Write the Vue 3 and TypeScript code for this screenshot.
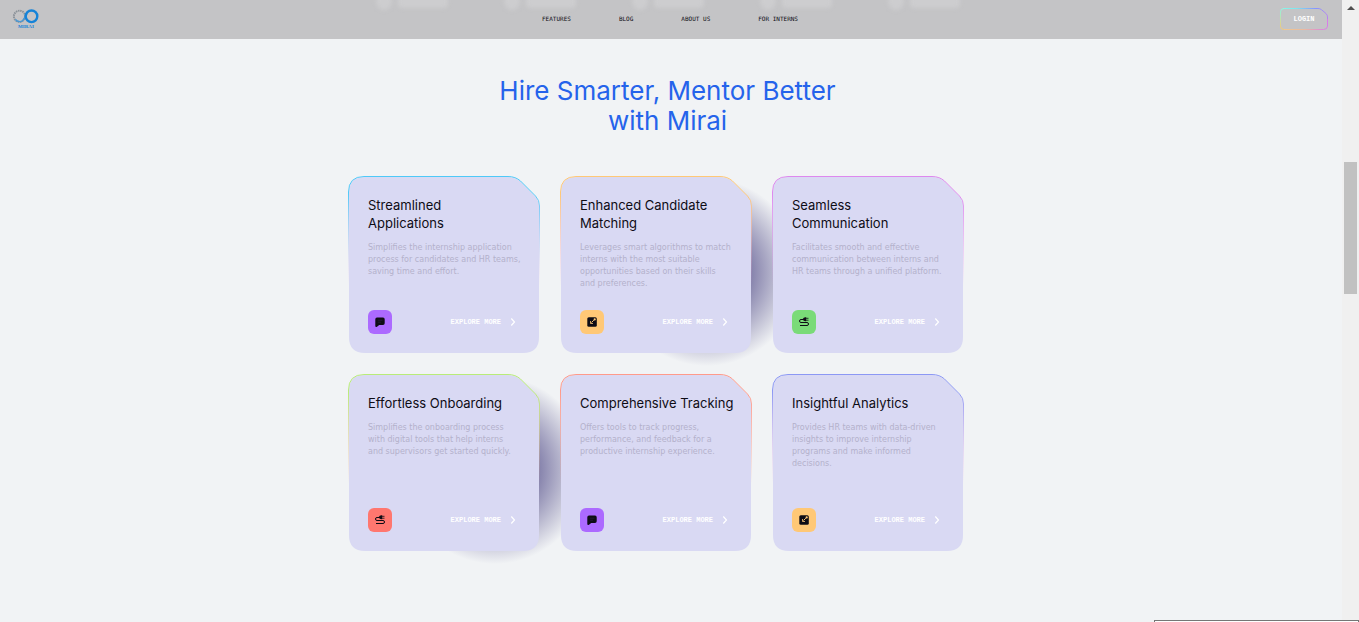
<script setup lang="ts">
type IconName = 'chat' | 'edit' | 'plug'

interface Benefit {
  id: string
  title: string
  text: string
  icon: IconName
  tone: string
  from: string
  to: string
  light?: boolean
}

const links: string[] = ['Features', 'Blog', 'About us', 'For Interns']

const benefits: Benefit[] = [
  { id: 'b1', title: 'Streamlined\nApplications', text: 'Simplifies the internship application\nprocess for candidates and HR teams,\nsaving time and effort.', icon: 'chat', tone: 'violet', from: '#4fc9f8', to: '#f0b8f0' },
  { id: 'b2', title: 'Enhanced Candidate\nMatching', text: 'Leverages smart algorithms to match\ninterns with the most suitable\nopportunities based on their skills\nand preferences.', icon: 'edit', tone: 'amber', from: '#ffc876', to: '#f3a6e4', light: true },
  { id: 'b3', title: 'Seamless\nCommunication', text: 'Facilitates smooth and effective\ncommunication between interns and\nHR teams through a unified platform.', icon: 'plug', tone: 'green', from: '#dd88ee', to: '#e9a0f4' },
  { id: 'b4', title: 'Effortless Onboarding', text: 'Simplifies the onboarding process\nwith digital tools that help interns\nand supervisors get started quickly.', icon: 'plug', tone: 'coral', from: '#b9ec78', to: '#ffb098', light: true },
  { id: 'b5', title: 'Comprehensive Tracking', text: 'Offers tools to track progress,\nperformance, and feedback for a\nproductive internship experience.', icon: 'chat', tone: 'violet', from: '#ff9a8a', to: '#ff9a8a' },
  { id: 'b6', title: 'Insightful Analytics', text: 'Provides HR teams with data-driven\ninsights to improve internship\nprograms and make informed\ndecisions.', icon: 'edit', tone: 'amber', from: '#8c98f4', to: '#f0b0e8' },
]
</script>

<template>
  <div class="page">
    <header class="bar">
      <div class="partners" aria-hidden="true">
        <span v-for="n in 5" :key="n" class="partner"><i class="dot"></i><i class="word"></i></span>
      </div>
      <a class="logo" href="#" aria-label="Mirai">
        <svg width="28" height="20" viewBox="0 0 28 20">
          <circle cx="7.5" cy="7.3" r="5.6" fill="none" stroke="#8b9299" stroke-width="2" stroke-dasharray="1.5 .7" />
          <path d="M3.5 10.5A5 5 0 0 0 11 11.2L15 5.2" fill="none" stroke="#4a97d2" stroke-width="1.4" />
          <circle cx="19.5" cy="7.3" r="5.8" fill="none" stroke="#1583d8" stroke-width="2.4" />
          <text x="14" y="18.6" text-anchor="middle" class="logo-text">MIRAI</text>
        </svg>
      </a>
      <nav class="nav">
        <a v-for="link in links" :key="link" href="#">{{ link }}</a>
      </nav>
      <button class="login" type="button">
        <svg class="login-frame" width="48" height="22" viewBox="0 0 48 22" aria-hidden="true">
          <defs>
            <linearGradient id="lt" gradientUnits="userSpaceOnUse" x1="0" x2="48" y1="0" y2="0"><stop offset="0" stop-color="#89f9e8" /><stop offset=".35" stop-color="#80e4ee" /><stop offset=".75" stop-color="#8794ff" /><stop offset="1" stop-color="#b686f0" /></linearGradient>
            <linearGradient id="lb" gradientUnits="userSpaceOnUse" x1="0" x2="48" y1="0" y2="0"><stop offset="0" stop-color="#f2ca8c" /><stop offset=".5" stop-color="#eaba9f" /><stop offset="1" stop-color="#d87bea" /></linearGradient>
            <linearGradient id="ll" gradientUnits="userSpaceOnUse" x1="0" x2="0" y1="0" y2="20"><stop offset="0" stop-color="#89f9e8" /><stop offset="1" stop-color="#f2ca7a" /></linearGradient>
          </defs>
          <path d="M4 21.500Q.5 21.500 .5 18V4Q.5 .5 4 .5" fill="none" stroke="url(#ll)" />
          <path d="M4 .5H38Q40 .5 41.500 1.700L46 5.500Q47.500 7 47.500 9V11" fill="none" stroke="url(#lt)" />
          <path d="M4 21.500H43.500Q47.500 21.500 47.500 18V11" fill="none" stroke="url(#lb)" />
        </svg>
        <span>Login</span>
      </button>
    </header>

    <main class="container">
      <h2 class="heading">Hire Smarter, Mentor Better with Mirai</h2>
      <div class="grid">
        <article v-for="b in benefits" :key="b.id" class="card">
          <div v-if="b.light" class="glow"></div>
          <svg class="shape" viewBox="0 0 192 177" preserveAspectRatio="none" aria-hidden="true">
            <defs>
              <linearGradient :id="b.id" gradientUnits="userSpaceOnUse" x1="0" y1="0" x2="0" y2="110">
                <stop offset="0" :stop-color="b.from" />
                <stop offset=".15" :stop-color="b.from" />
                <stop offset="1" :stop-color="b.to" stop-opacity="0" />
              </linearGradient>
            </defs>
            <path d="M1 16Q1 1 16 1H160Q167 1 172 5L187 20Q191 24 191 30V161Q191 177 175 177H17Q1 177 1 161Z" fill="#d9d9f3" />
            <path d="M.5 110V16Q.5 .5 16 .5H160Q167.500 .5 172.500 5L187.500 20Q191.500 24 191.500 30V110" fill="none" :stroke="`url(#${b.id})`" />
          </svg>
          <div class="body">
            <h3>{{ b.title }}</h3>
            <p>{{ b.text }}</p>
            <div class="foot">
              <span class="icon" :class="b.tone">
                <svg v-if="b.icon === 'chat'" width="12" height="12" viewBox="0 0 12 12">
                  <path d="M3 1.500H9Q10.700 1.500 10.700 3.200V7.200Q10.700 9 9 9H5.200L3 10.700Q1.300 11.500 1.300 9.700V3.200Q1.300 1.500 3 1.500Z" fill="#0e0c15" />
                  <path d="M3.800 4.200H8.500M3.800 6.200H7" stroke="#2c1c44" stroke-width=".7" />
                </svg>
                <svg v-else-if="b.icon === 'edit'" width="12" height="12" viewBox="0 0 12 12">
                  <rect x="1.300" y="1.300" width="9.500" height="9.500" rx="1.500" fill="#0e0c15" />
                  <path d="M5.500 6.500L7.800 4.200" stroke="#ffc876" stroke-width="1" />
                  <path d="M4.500 5V7.500H7" stroke="#ffc876" stroke-width=".8" fill="none" />
                  <circle cx="8.700" cy="3.400" r="1.100" fill="#ffc876" />
                </svg>
                <svg v-else width="12" height="12" viewBox="0 0 12 12">
                  <path d="M5 3.500H3Q1.500 3.500 1.500 5T3 6.500H9Q10.500 6.500 10.500 8T9 9.500H2" fill="none" stroke="#0e0c15" />
                  <path d="M4.600 3.300Q5.500 1.300 7.300 1.300H8.200V5.200H7.300Q5.500 5.200 4.600 3.300Z" fill="#0e0c15" />
                  <path d="M8 2.300H10.500M8 4.200H10.500" stroke="#0e0c15" stroke-width=".8" />
                </svg>
              </span>
              <a class="more" href="#">
                <span>Explore more</span>
                <svg width="12" height="12" viewBox="0 0 12 12" aria-hidden="true"><path d="M4.300 2.500L7.500 6L4.300 9.500" fill="none" stroke="#fff" stroke-width="1.200" /></svg>
              </a>
            </div>
          </div>
        </article>
      </div>
    </main>

    <div class="scroll" aria-hidden="true"><i class="arrow"></i><i class="thumb"></i></div>
    <div class="status" aria-hidden="true"></div>
  </div>
</template>

<style>
body {
  background: #f1f3f5;
  overflow: hidden;
}
</style>

<style scoped>
.page {
  min-height: 100vh;
  padding-right: 17px;
  box-sizing: border-box;
  font-family: Inter, "Liberation Sans", sans-serif;
  color: #0e0c15;
}
a {
  color: inherit;
  text-decoration: none;
}
.bar {
  position: relative;
  display: grid;
  grid-template-columns: 1fr auto 1fr;
  align-items: center;
  box-sizing: border-box;
  height: 39px;
  padding: 0 14px 2px 12px;
  background: #c4c4c6;
  overflow: hidden;
}
.partners {
  position: absolute;
  top: -8px;
  left: 0;
  right: 6px;
  display: flex;
  justify-content: center;
  gap: 56px;
  filter: blur(2px);
}
.partner {
  display: flex;
  align-items: center;
  gap: 6px;
  width: 72px;
}
.dot {
  width: 16px;
  height: 18px;
  border-radius: 50%;
  background: #cdcdcf;
}
.word {
  flex: 1;
  height: 13px;
  border-radius: 4px;
  background: #cdcdcf;
}
.logo {
  position: relative;
  justify-self: start;
  display: flex;
}
.logo svg {
  display: block;
}
.logo-text {
  font: bold 5px "Liberation Serif", serif;
  fill: #1583d8;
}
.nav {
  position: relative;
  display: flex;
  gap: 48px;
  font: 400 6px/12px "DejaVu Sans Mono", monospace;
  text-transform: uppercase;
}
.login {
  position: relative;
  justify-self: end;
  width: 48px;
  height: 22px;
  padding: 0;
  border: 0;
  background: none;
  color: #fff;
  font: bold 7px/22px "Liberation Mono", monospace;
  text-transform: uppercase;
}
.login-frame {
  position: absolute;
  inset: 0;
}
.container {
  max-width: 646px;
  margin: 0 auto;
  padding: 37px 0 40px;
}
.heading {
  max-width: 360px;
  margin: 0 auto 40px;
  padding-right: 7px;
  color: #2563eb;
  font-size: 26px;
  line-height: 30px;
  font-weight: 400;
  text-align: center;
}
.grid {
  display: flex;
  flex-wrap: wrap;
  gap: 21px 20px;
}
.card {
  position: relative;
  width: 192px;
  min-height: 177px;
  display: flex;
}
.glow {
  position: absolute;
  left: 53px;
  top: 2px;
  width: 188px;
  height: 188px;
  background: radial-gradient(closest-side, #28206c, rgba(40, 32, 108, 0));
}
.shape {
  position: absolute;
  inset: 0;
  width: 100%;
  height: 100%;
}
.body {
  position: relative;
  flex: 1;
  display: flex;
  flex-direction: column;
  padding: 20px 16px 19px 20px;
}
h3 {
  margin: 0 0 10px;
  font-size: 13px;
  line-height: 18px;
  font-weight: 400;
  white-space: pre-line;
}
p {
  margin: 0;
  color: #b4b1cb;
  font-family: "DejaVu Sans", sans-serif;
  font-size: 8px;
  line-height: 12px;
  white-space: pre-line;
}
.foot {
  display: flex;
  align-items: center;
  justify-content: space-between;
  margin-top: auto;
  padding-right: 5px;
}
.icon {
  display: flex;
  align-items: center;
  justify-content: center;
  width: 24px;
  height: 24px;
  border-radius: 6px;
}
.violet { background: #ac6aff; }
.amber { background: #ffc876; }
.green { background: #7adb78; }
.coral { background: #ff776f; }
.more {
  display: flex;
  align-items: center;
  gap: 6px;
  color: #fff;
  font: bold 7px/12px "Liberation Mono", monospace;
  text-transform: uppercase;
}
.scroll {
  position: fixed;
  top: 0;
  right: 0;
  bottom: 0;
  width: 17px;
  background: #f0f0f0;
}
.arrow {
  display: block;
  width: 0;
  margin: 6px auto 0;
  border: 4px solid transparent;
  border-top: 0;
  border-bottom-color: #505050;
}
.thumb {
  display: block;
  width: 13px;
  height: 132px;
  margin: 152px auto 0;
  background: #c1c1c1;
}
.status {
  position: fixed;
  right: 0;
  bottom: 0;
  width: 205px;
  height: 2px;
  box-sizing: border-box;
  border: 1px solid #767676;
  border-bottom: 0;
  background: #fff;
}
</style>
